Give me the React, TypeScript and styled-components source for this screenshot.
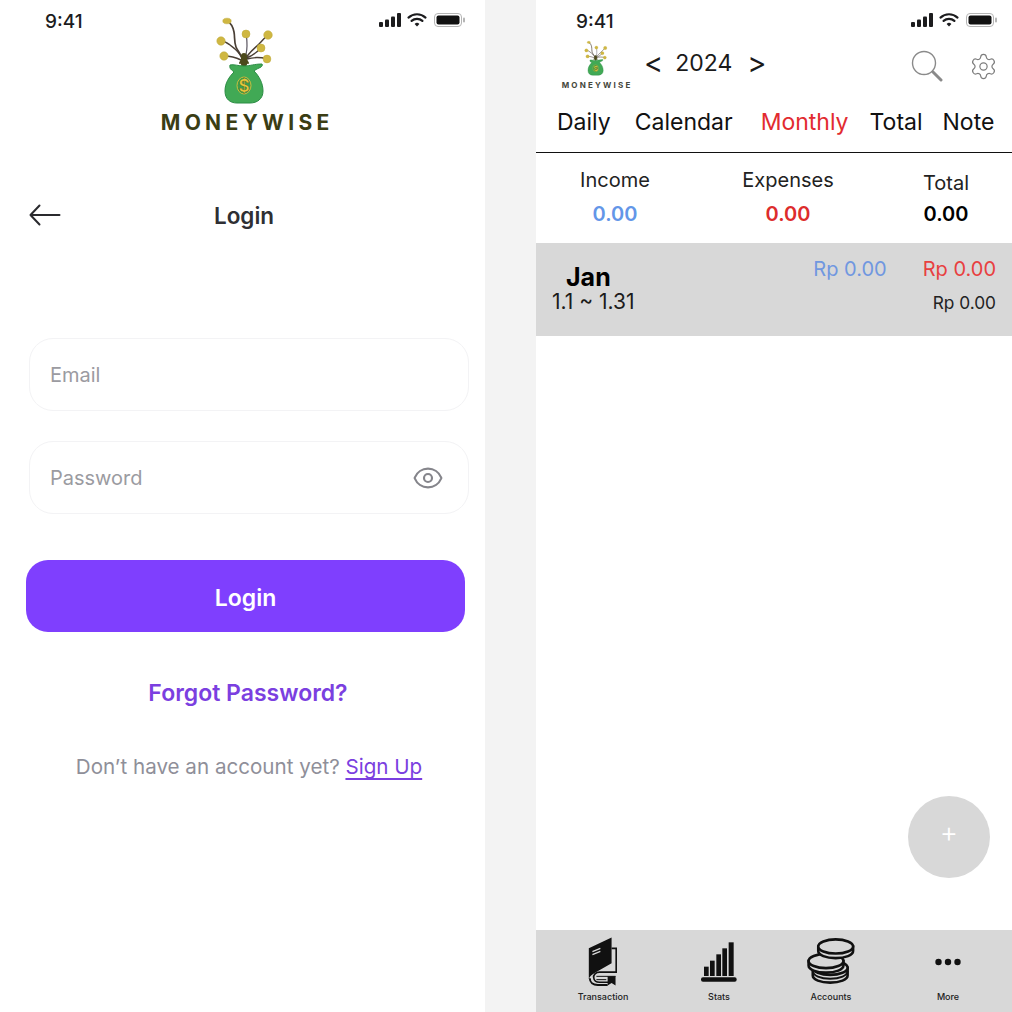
import React from "react";
import styled, { createGlobalStyle } from "styled-components";
import { Eye, Settings } from "lucide-react";

const Global = createGlobalStyle`
  html, body { margin: 0; padding: 0; background: #fff; }
  body { font-family: Inter, "Liberation Sans", sans-serif; }
  * { box-sizing: border-box; }
`;

const Page = styled.div`
  width: 1012px;
  height: 1012px;
  display: grid;
  grid-template-columns: 485px 51px 476px;
  overflow: hidden;
`;
const LoginPanel = styled.section`
  display: flex;
  flex-direction: column;
  background: #fff;
`;
const Divider = styled.div`
  background: #f3f3f3;
`;
const TopGrid = styled.div`
  display: grid;
  grid-template-columns: 160px 170px 1fr;
`;
const Time = styled.div<{ $left: number }>`
  margin-left: ${(p) => p.$left}px;
  margin-top: 11px;
  font-size: 19px;
  line-height: 22px;
  font-weight: 500;
  color: #1c1c1e;
`;
const StatusSlot = styled.div`
  display: flex;
  justify-content: flex-end;
  padding-right: 20px;
`;
const StatusIcons = styled.svg`
  display: block;
  margin-top: 13px;
  flex: none;
`;
const BrandBlock = styled.div`
  display: flex;
  flex-direction: column;
  align-items: center;
  padding-top: 15px;
`;
const BrandName = styled.div<{ $size: number; $spacing: number; $color: string }>`
  margin-top: 5px;
  font-size: ${(p) => p.$size}px;
  font-weight: 700;
  letter-spacing: ${(p) => p.$spacing}px;
  margin-right: -${(p) => p.$spacing}px;
  color: ${(p) => p.$color};
  line-height: 1.2;
  white-space: nowrap;
`;
const LoginHeader = styled.div`
  display: grid;
  grid-template-columns: 1fr auto 1fr;
  align-items: center;
  margin-top: 66px;
  padding: 0 26px 0 29px;
`;
const LoginTitle = styled.h1`
  margin: 1px 0 -1px;
  font-size: 22.5px;
  line-height: 28px;
  font-weight: 600;
  color: #2f2f33;
`;
const FieldStack = styled.div`
  display: flex;
  flex-direction: column;
  gap: 30px;
  margin: 109px 16px 0 29px;
`;
const Field = styled.div`
  height: 73px;
  border: 1px solid #f3f3f5;
  border-radius: 24px;
  display: flex;
  align-items: center;
  justify-content: space-between;
  padding: 0 24px 0 20px;
  font-size: 20px;
  color: #9b9ba1;
`;
const LoginButton = styled.button`
  display: block;
  height: 72px;
  margin: 46px 20px 0 26px;
  padding: 3px 0 0;
  border: 0;
  border-radius: 22px;
  background: #7f3ffe;
  color: #fff;
  font-family: inherit;
  font-size: 23px;
  font-weight: 600;
`;
const Forgot = styled.div`
  margin-top: 47px;
  padding-left: 11px;
  text-align: center;
  font-size: 23px;
  line-height: 28px;
  font-weight: 600;
  color: #7b3fe0;
`;
const SignUpLine = styled.div`
  margin-top: 46px;
  padding-left: 13px;
  text-align: center;
  font-size: 20.6px;
  line-height: 28px;
  color: #8f8f99;
`;
const SignUpLink = styled.a`
  color: #7b3fe0;
  text-decoration: underline;
  text-underline-offset: 4px;
  text-decoration-thickness: 1.5px;
`;

const MoneyPanel = styled.section`
  position: relative;
  display: flex;
  flex-direction: column;
  background: #fff;
  height: 1012px;
`;
const MoneyStatus = styled.div`
  display: flex;
  justify-content: space-between;
  padding-right: 15px;
`;
const Toolbar = styled.div`
  display: flex;
  align-items: flex-start;
  padding: 7px 14px 0 24px;
  height: 75px;
`;
const MiniBrand = styled.div`
  display: flex;
  flex-direction: column;
  align-items: center;
  width: 72px;
`;
const YearNav = styled.div`
  display: flex;
  align-items: center;
  gap: 12px;
  margin: 6px 0 0 12px;
  font-size: 23px;
  line-height: 34px;
  color: #1a1a1a;
`;
const YearValue = styled.span`
  padding-right: 3px;
`;
const Chevron = styled.span`
  font-size: 29px;
  line-height: 34px;
`;
const ToolIcons = styled.div`
  margin-left: auto;
  display: flex;
  align-items: center;
  gap: 26px;
  padding-top: 10px;
  color: #7d7d7d;
`;
const Tabs = styled.nav`
  display: flex;
  height: 44.5px;
  padding-left: 21px;
  border-bottom: 1.5px solid #111;
`;
const Tab = styled.div<{ $active?: boolean; $gap: number }>`
  margin-left: ${(p) => p.$gap}px;
  font-size: 23px;
  line-height: 28px;
  color: ${(p) => (p.$active ? "#e22b30" : "#111")};
  white-space: nowrap;
`;
const Summary = styled.div`
  display: grid;
  grid-template-columns: 158px 188px 128px;
  height: 90.5px;
  padding-top: 14px;
  text-align: center;
`;
const SummaryCol = styled.div<{ $drop?: boolean }>`
  display: flex;
  flex-direction: column;
  padding-top: ${(p) => (p.$drop ? 3 : 0)}px;
`;
const SummaryLabel = styled.div<{ $tight?: boolean }>`
  font-size: 20px;
  line-height: 26px;
  height: ${(p) => (p.$tight ? 23 : 26)}px;
  color: #222;
`;
const SummaryValue = styled.div<{ $color: string }>`
  margin-top: 8px;
  font-size: 20px;
  line-height: 26px;
  font-weight: 600;
  color: ${(p) => p.$color};
`;
const MonthRow = styled.div`
  display: flex;
  justify-content: space-between;
  height: 93px;
  background: #d8d8d8;
  padding: 13px 16px 0 16px;
`;
const MonthInfo = styled.div`
  display: flex;
  flex-direction: column;
  padding-top: 8px;
`;
const MonthName = styled.div`
  font-size: 25px;
  line-height: 26px;
  font-weight: 700;
  color: #000;
  margin-left: 14px;
`;
const MonthRange = styled.div`
  font-size: 21px;
  line-height: 24px;
  color: #1c1c1c;
`;
const Amounts = styled.div`
  display: grid;
  grid-template-columns: auto auto;
  column-gap: 36px;
  justify-items: end;
  align-content: start;
`;
const Amount = styled.div<{ $color: string; $small?: boolean; $wide?: boolean }>`
  grid-column: ${(p) => (p.$wide ? "2" : "auto")};
  margin-top: ${(p) => (p.$small ? 8 : 0)}px;
  font-size: ${(p) => (p.$small ? 17.3 : 20)}px;
  line-height: 26px;
  color: ${(p) => p.$color};
`;
const Spacer = styled.div`
  flex: 1;
`;
const Fab = styled.button`
  position: absolute;
  left: 372px;
  top: 796px;
  width: 82px;
  height: 82px;
  padding: 0 0 10px;
  border: 0;
  border-radius: 50%;
  background: #d8d8d8;
  color: #fff;
  font-family: inherit;
  font-size: 28px;
  font-weight: 300;
`;
const BottomNav = styled.nav`
  height: 82px;
  background: #d8d8d8;
  display: grid;
  grid-template-columns: 134px 98px 126px 108px;
`;
const NavItem = styled.div`
  position: relative;
  display: flex;
  flex-direction: column;
  align-items: center;
  justify-content: flex-end;
  padding-bottom: 10px;
`;
const NavGraphic = styled.div<{ $top: number }>`
  position: absolute;
  left: 50%;
  transform: translateX(-50%);
  top: ${(p) => p.$top}px;
  line-height: 0;
`;
const NavLabel = styled.div`
  font-size: 9px;
  line-height: 11px;
  font-weight: 500;
  white-space: nowrap;
  color: #222;
`;

const Status = () => (
  <StatusIcons width="86" height="14" viewBox="0 0 86 14">
    <rect x="0" y="9" width="4" height="5" rx="1" fill="#1c1c1e" />
    <rect x="6" y="6.5" width="4" height="7.5" rx="1" fill="#1c1c1e" />
    <rect x="12" y="3.5" width="4" height="10.5" rx="1" fill="#1c1c1e" />
    <rect x="18" y="0" width="4" height="14" rx="1" fill="#1c1c1e" />
    <path d="M29.5 4.6a12.5 12.5 0 0 1 17 0M32.6 7.9a8 8 0 0 1 10.8 0" fill="none" stroke="#1c1c1e" strokeWidth="2.2" strokeLinecap="round" />
    <path d="M35.6 10.9a3.6 3.6 0 0 1 4.8 0L38 13.6z" fill="#1c1c1e" />
    <rect x="55.5" y="0.5" width="27" height="13" rx="3.5" fill="none" stroke="#b5b5b5" />
    <rect x="57.5" y="2.5" width="23" height="9" rx="2" fill="#111" />
    <rect x="84" y="4.5" width="2" height="5" rx="1" fill="#b5b5b5" />
  </StatusIcons>
);

const Tree = ({ w, h }: { w: number; h: number }) => (
  <svg width={w} height={h} viewBox="215 15 60 90">
    <g fill="none" stroke="#4a3f35" strokeLinecap="round">
      <path d="M243 62c-1-8-5-10-7-15s-1-10-2-15-3-9-7-11" strokeWidth="1.7" />
      <path d="M245 60c1-6 2-9 2-14s0-8-1-12" strokeWidth="1.2" stroke="#5a5560" />
      <path d="M245 60c3-7 9-11 14-16s5-6 8-8" strokeWidth="1.4" />
      <path d="M242 58c-3-7-8-10-12-13s-5-4-9-4" strokeWidth="1.4" />
      <path d="M241 60c-6-3-10-4-17-4" strokeWidth="1.4" />
      <path d="M246 58c6-2 9-4 14-9M247 59c7-2 13-2 20 0" strokeWidth="1.4" />
      <path d="M244 64l0-8" strokeWidth="6" stroke="#4c4a1c" />
      <path d="M240 63l4-7 4 7" strokeWidth="2" stroke="#4c4a1c" />
    </g>
    <g fill="#cfb742" stroke="#bda838" strokeWidth="0.5">
      <ellipse cx="227" cy="21" rx="4.2" ry="2.8" />
      <circle cx="246" cy="34" r="4" />
      <circle cx="268" cy="35" r="4.3" />
      <circle cx="221" cy="41" r="4.2" />
      <circle cx="261" cy="48" r="4" />
      <circle cx="224" cy="56" r="4.2" />
      <circle cx="267" cy="59" r="3.9" />
    </g>
    <path
      d="M230 65c4-1 8 1 14 1s10-2 18-2c1 1 0 3-3 4-2 1-4 2-5 3 5 5 9 12 9 20 0 8-6 12-13 12h-13c-7 0-12-4-12-12 0-8 4-14 9-19-2-2-5-3-4-7z"
      fill="#41a955"
      stroke="#2b8c44"
    />
    <ellipse cx="244" cy="85.5" rx="7" ry="8.5" fill="#3d9c4d" stroke="#d8bf3c" strokeWidth="0.9" />
    <text x="244" y="91.5" textAnchor="middle" fontSize="17" fontWeight="600" fontFamily="Inter, sans-serif" fill="#e6c93a" stroke="#3d3a12" strokeWidth="0.25">$</text>
  </svg>
);

const BackArrow = () => (
  <svg width="32" height="22" viewBox="0 0 32 22" fill="none" stroke="#2a2a2e" strokeWidth="2" strokeLinecap="round" strokeLinejoin="round">
    <path d="M1.5 11h29M10.5 1.5 1.5 11l9 9.5" />
  </svg>
);

const SearchGlyph = () => (
  <svg width="32" height="32" viewBox="0 0 32 32" fill="none" stroke="#8a8a8a" strokeLinecap="round">
    <circle cx="13" cy="13" r="11.5" strokeWidth="1.4" />
    <path d="M22 22l8 8" strokeWidth="3" />
  </svg>
);

const BookGlyph = () => (
  <svg width="33" height="53" viewBox="170 45 100 160">
    <path d="M177 85 246 52v78l-49 28c-10 6-18 12-20 20z" fill="#111" />
    <path d="M188 95l24-10M188 104l24-10" stroke="#d8d8d8" strokeWidth="4" />
    <path d="M246 85h14v72l-50 0c-12 0-20 8-18 18 1 8 8 13 18 13h28" fill="none" stroke="#111" strokeWidth="5" />
    <path d="M180 176c0 12 10 20 24 20h30" fill="none" stroke="#111" strokeWidth="6" />
    <path d="M200 170h58M200 180h30" stroke="#111" strokeWidth="3" />
    <path d="M234 170h24v28l-12-8-12 8z" fill="#111" />
  </svg>
);

const StatsGlyph = () => (
  <svg width="37" height="42" viewBox="515 60 108 126" fill="#111">
    <rect x="524" y="140" width="14" height="28" />
    <rect x="542" y="122" width="14" height="46" />
    <rect x="561" y="103" width="14" height="65" />
    <rect x="579" y="85" width="14" height="83" />
    <rect x="598" y="67" width="15" height="101" />
    <rect x="515" y="172" width="107" height="13" rx="6" />
  </svg>
);

const Coin = ({ cx, cy, ext }: { cx: number; cy: number; ext: number }) => (
  <g stroke="#111" strokeWidth="8" fill="#d8d8d8">
    <path d={`M${cx - 54} ${cy}v${ext}c0 13 24 22 54 22s54-9 54-22v-${ext}z`} />
    <ellipse cx={cx} cy={cy} rx="54" ry="22" />
  </g>
);

const CoinsGlyph = () => (
  <svg width="50" height="50" viewBox="830 50 155 150">
    <Coin cx={905} cy={146} ext={24} />
    <path d="M851 156c0 14 24 24 54 24s54-10 54-24" fill="none" stroke="#111" strokeWidth="6" />
    <Coin cx={892} cy={125} ext={14} />
    <Coin cx={922} cy={80} ext={14} />
  </svg>
);

const DotsGlyph = () => (
  <svg width="26" height="50" viewBox="0 0 26 50" fill="#111">
    <circle cx="3.5" cy="26" r="3.2" />
    <circle cx="13" cy="26" r="3.2" />
    <circle cx="22.5" cy="26" r="3.2" />
  </svg>
);

export default function App() {
  return (
    <Page>
      <Global />
      <LoginPanel>
        <TopGrid>
          <Time $left={45}>9:41</Time>
          <BrandBlock>
            <Tree w={60} h={90} />
            <BrandName $size={21} $spacing={4.3} $color="#3a3d14">MONEYWISE</BrandName>
          </BrandBlock>
          <StatusSlot>
            <Status />
          </StatusSlot>
        </TopGrid>
        <LoginHeader>
          <BackArrow />
          <LoginTitle>Login</LoginTitle>
        </LoginHeader>
        <FieldStack>
          <Field>Email</Field>
          <Field>
            Password
            <Eye size={32} strokeWidth={1.6} color="#85858b" />
          </Field>
        </FieldStack>
        <LoginButton>Login</LoginButton>
        <Forgot>Forgot Password?</Forgot>
        <SignUpLine>
          Don’t have an account yet? <SignUpLink>Sign Up</SignUpLink>
        </SignUpLine>
      </LoginPanel>
      <Divider />
      <MoneyPanel>
        <MoneyStatus>
          <Time $left={40}>9:41</Time>
          <Status />
        </MoneyStatus>
        <Toolbar>
          <MiniBrand>
            <Tree w={24} h={36} />
            <BrandName $size={8} $spacing={2.2} $color="#44463a">MONEYWISE</BrandName>
          </MiniBrand>
          <YearNav>
            <Chevron>&lt;</Chevron>
            <YearValue>2024</YearValue>
            <Chevron>&gt;</Chevron>
          </YearNav>
          <ToolIcons>
            <SearchGlyph />
            <Settings size={29} strokeWidth={1} />
          </ToolIcons>
        </Toolbar>
        <Tabs>
          <Tab $gap={0}>Daily</Tab>
          <Tab $gap={24}>Calendar</Tab>
          <Tab $gap={28} $active>Monthly</Tab>
          <Tab $gap={21}>Total</Tab>
          <Tab $gap={20}>Note</Tab>
        </Tabs>
        <Summary>
          <SummaryCol>
            <SummaryLabel>Income</SummaryLabel>
            <SummaryValue $color="#6396e8">0.00</SummaryValue>
          </SummaryCol>
          <SummaryCol>
            <SummaryLabel>Expenses</SummaryLabel>
            <SummaryValue $color="#dd2c2c">0.00</SummaryValue>
          </SummaryCol>
          <SummaryCol $drop>
            <SummaryLabel $tight>Total</SummaryLabel>
            <SummaryValue $color="#000">0.00</SummaryValue>
          </SummaryCol>
        </Summary>
        <MonthRow>
          <MonthInfo>
            <MonthName>Jan</MonthName>
            <MonthRange>1.1 ~ 1.31</MonthRange>
          </MonthInfo>
          <Amounts>
            <Amount $color="#7097e0">Rp 0.00</Amount>
            <Amount $color="#e84040">Rp 0.00</Amount>
            <Amount $color="#222" $small $wide>Rp 0.00</Amount>
          </Amounts>
        </MonthRow>
        <Spacer />
        <Fab>+</Fab>
        <BottomNav>
          <NavItem>
            <NavGraphic $top={5}><BookGlyph /></NavGraphic>
            <NavLabel>Transaction</NavLabel>
          </NavItem>
          <NavItem>
            <NavGraphic $top={10}><StatsGlyph /></NavGraphic>
            <NavLabel>Stats</NavLabel>
          </NavItem>
          <NavItem>
            <NavGraphic $top={6}><CoinsGlyph /></NavGraphic>
            <NavLabel>Accounts</NavLabel>
          </NavItem>
          <NavItem>
            <NavGraphic $top={6}><DotsGlyph /></NavGraphic>
            <NavLabel>More</NavLabel>
          </NavItem>
        </BottomNav>
      </MoneyPanel>
    </Page>
  );
}
